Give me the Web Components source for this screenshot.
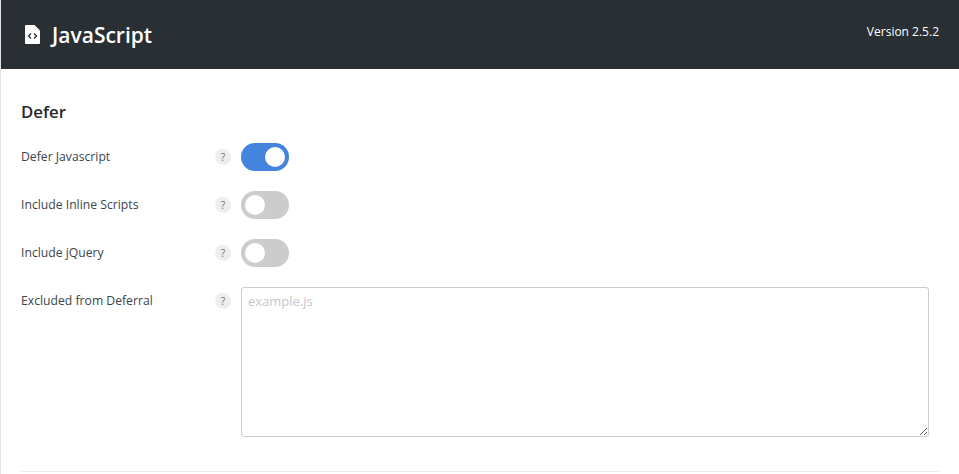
<!DOCTYPE html>
<html>
<head>
<meta charset="utf-8">
<style>
  html, body { margin: 0; height: 100%; overflow: hidden; background: #fff; }
  body { font-family: "Open Sans", "Noto Sans", sans-serif; }
</style>
</head>
<body>
<settings-page>
  <page-header slot="header" version="Version 2.5.2">JavaScript</page-header>
  <settings-section title="Defer">
    <setting-row label="Defer Javascript"><toggle-switch checked></toggle-switch></setting-row>
    <setting-row label="Include Inline Scripts"><toggle-switch></toggle-switch></setting-row>
    <setting-row label="Include jQuery"><toggle-switch></toggle-switch></setting-row>
    <setting-row label="Excluded from Deferral"><code-textarea placeholder="example.js"></code-textarea></setting-row>
  </settings-section>
</settings-page>
<script>
class SettingsPage extends HTMLElement {
  constructor() {
    super();
    this.attachShadow({ mode: "open" }).innerHTML = `
      <style>
        :host { display: block; height: 474px; border-left: 1px solid #e2e4e7; box-sizing: border-box; overflow: hidden; }
      </style>
      <slot name="header"></slot>
      <slot></slot>
    `;
  }
}

class PageHeader extends HTMLElement {
  constructor() {
    super();
    const version = this.getAttribute("version");
    this.attachShadow({ mode: "open" }).innerHTML = `
      <style>
        :host { display: flex; align-items: center; justify-content: space-between; height: 69px; padding: 0 20px 0 24px; background: #2a2f33; color: #fff; }
        .title { display: flex; align-items: center; gap: 12px; font-size: 21px; font-weight: 600; }
        svg { display: block; }
        .version { font-size: 12px; font-weight: 500; padding-bottom: 6px; }
      </style>
      <div class="title">
        <svg width="15" height="19" viewBox="0 0 15 19">
          <path d="M1 0H9.500L15 5.500V18A1 1 0 0 1 14 19H1A1 1 0 0 1 0 18V1A1 1 0 0 1 1 0Z" fill="#fff"/>
          <path d="M6 8.500L3.500 11L6 13.500M9 8.500L11.500 11L9 13.500" fill="none" stroke="#2a2f33" stroke-width="1.300"/>
        </svg>
        <span><slot></slot></span>
      </div>
      <div class="version">${version}</div>
    `;
  }
}

class SettingsSection extends HTMLElement {
  constructor() {
    super();
    const title = this.getAttribute("title");
    this.removeAttribute("title");
    this.attachShadow({ mode: "open" }).innerHTML = `
      <style>
        :host { display: block; margin: 0 20px; padding: 30px 0 34px; border-bottom: 1px solid #eceeef; }
        h2 { margin: 0 0 19px; font-size: 16.800px; line-height: 25px; font-weight: 600; color: #23282d; }
        .rows { display: flex; flex-direction: column; gap: 20px; }
      </style>
      <h2>${title}</h2>
      <div class="rows"><slot></slot></div>
    `;
  }
}

class SettingRow extends HTMLElement {
  constructor() {
    super();
    const label = this.getAttribute("label");
    this.attachShadow({ mode: "open" }).innerHTML = `
      <style>
        :host { display: grid; grid-template-columns: 194px 26px 1fr; font-size: 12.200px; color: #3c434a; }
        .label, .help { height: 27px; display: flex; align-items: center; }
        .help span { width: 16px; height: 16px; border-radius: 50%; background: #eeeeee; color: #777; font-size: 10.500px; display: flex; align-items: center; justify-content: center; }
        .control { padding-right: 10px; }
      </style>
      <div class="label">${label}</div>
      <div class="help"><span>?</span></div>
      <div class="control"><slot></slot></div>
    `;
  }
}

class ToggleSwitch extends HTMLElement {
  constructor() {
    super();
    this.attachShadow({ mode: "open" }).innerHTML = `
      <style>
        :host { display: flex; align-items: center; width: 48px; height: 28px; padding: 4px; box-sizing: border-box; border-radius: 14px; background: #cccccc; }
        :host([checked]) { background: #4384dc; justify-content: flex-end; }
        .knob { width: 20px; height: 20px; border-radius: 50%; background: #fff; }
      </style>
      <div class="knob"></div>
    `;
  }
}

class CodeTextarea extends HTMLElement {
  constructor() {
    super();
    const placeholder = this.getAttribute("placeholder");
    this.attachShadow({ mode: "open" }).innerHTML = `
      <style>
        :host { display: block; }
        textarea { display: block; width: 100%; height: 150px; box-sizing: border-box; padding: 3px 6px; border: 1px solid #cccccc; border-radius: 3px; outline: none; font: 13px/20px "Open Sans", "Noto Sans", sans-serif; color: #3c434a; resize: vertical; }
        textarea::placeholder { color: #c4c6c8; opacity: 1; }
      </style>
      <textarea placeholder="${placeholder}"></textarea>
    `;
  }
}

customElements.define("settings-page", SettingsPage);
customElements.define("page-header", PageHeader);
customElements.define("settings-section", SettingsSection);
customElements.define("setting-row", SettingRow);
customElements.define("toggle-switch", ToggleSwitch);
customElements.define("code-textarea", CodeTextarea);
</script>
</body>
</html>
